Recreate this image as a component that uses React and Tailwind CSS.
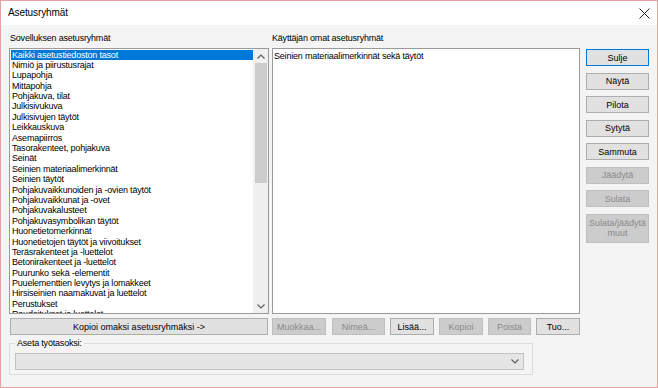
import React from "react";

const items = [
  "Kaikki asetustiedoston tasot",
  "Nimiö ja piirustusrajat",
  "Lupapohja",
  "Mittapohja",
  "Pohjakuva, tilat",
  "Julkisivukuva",
  "Julkisivujen täytöt",
  "Leikkauskuva",
  "Asemapiirros",
  "Tasorakenteet, pohjakuva",
  "Seinät",
  "Seinien materiaalimerkinnät",
  "Seinien täytöt",
  "Pohjakuvaikkunoiden ja -ovien täytöt",
  "Pohjakuvaikkunat ja -ovet",
  "Pohjakuvakalusteet",
  "Pohjakuvasymbolikan täytöt",
  "Huonetietomerkinnät",
  "Huonetietojen täytöt ja viivoitukset",
  "Teräsrakenteet ja -luettelot",
  "Betonirakenteet ja -luettelot",
  "Puurunko sekä -elementit",
  "Puuelementtien levytys ja lomakkeet",
  "Hirsiseinien naamakuvat ja luettelot",
  "Perustukset",
  "Raudoitukset ja luettelot",
];

function Btn({ children, disabled, primary, className = "" }) {
  const look = disabled
    ? "bg-[#cccccc] border-[#bfbfbf] text-[#8a8a8a]"
    : primary
    ? "bg-[#e1e1e1] border-[#0078d7] text-black"
    : "bg-[#e1e1e1] border-[#adadad] text-black";
  return (
    <div
      className={`flex items-center justify-center border text-[9px] leading-[10px] text-center ${look} ${className}`}
    >
      {children}
    </div>
  );
}

function Chevron({ up }) {
  return (
    <svg width="8" height="5" viewBox="0 0 8 5">
      <path
        d={up ? "M0.5 4.5 L4 1 L7.5 4.5" : "M0.5 0.5 L4 4 L7.5 0.5"}
        fill="none"
        stroke="#606060"
        strokeWidth="1.2"
      />
    </svg>
  );
}

export default function App() {
  return (
    <div className="w-[658px] h-[388px] border border-[#e6a1a1] flex flex-col bg-[#f4f4f4] font-['Liberation_Sans',Arial,sans-serif] text-black overflow-hidden">
      {/* title bar */}
      <div className="h-[24px] bg-white flex items-center justify-between pl-[7px] pr-[7px] shrink-0">
        <span className="text-[10px] leading-[12px] tracking-[-0.1px]">Asetusryhmät</span>
        <svg width="11" height="11" viewBox="0 0 11 11">
          <path d="M0.5 0.5 L10.5 10.5 M10.5 0.5 L0.5 10.5" stroke="#222" strokeWidth="1" />
        </svg>
      </div>

      {/* body */}
      <div className="flex flex-col px-[8px]">
        <div className="flex">
          {/* left column */}
          <div className="w-[260px] flex flex-col">
            <div className="h-[23px] flex items-center pl-[1px] pt-[2px] text-[9px] leading-[10px] tracking-[-0.2px]">
              Sovelluksen asetusryhmät
            </div>
            <div className="h-[266px] border border-[#9a9a9a] bg-white flex">
              <div className="flex-1 overflow-hidden pl-[1px] pt-[0.5px]">
                {items.map((t, i) => (
                  <div
                    key={i}
                    className={`h-[10.4px] leading-[10.4px] pl-[1px] text-[9px] tracking-[-0.2px] whitespace-nowrap ${
                      i === 0 ? "bg-[#0078d7] text-white" : "text-black"
                    }`}
                  >
                    {t}
                  </div>
                ))}
              </div>
              <div className="w-[15px] bg-[#f0f0f0] flex flex-col items-center">
                <div className="h-[14px] flex items-center justify-center">
                  <Chevron up />
                </div>
                <div className="w-[12px] h-[120px] bg-[#cdcdcd]" />
                <div className="flex-1" />
                <div className="h-[14px] flex items-center justify-center">
                  <Chevron />
                </div>
              </div>
            </div>
            <Btn className="mt-[4px] mx-[1px] h-[17px]">Kopioi omaksi asetusryhmäksi -&gt;</Btn>
          </div>

          {/* right column */}
          <div className="w-[308px] ml-[3px] flex flex-col">
            <div className="h-[23px] flex items-center pt-[2px] text-[9px] leading-[10px] tracking-[-0.2px]">
              Käyttäjän omat asetusryhmät
            </div>
            <div className="h-[266px] border border-[#9a9a9a] bg-white pl-[1px] pt-[2px]">
              <div className="text-[9px] leading-[10.4px] tracking-[-0.2px] whitespace-nowrap">
                Seinien materiaalimerkinnät sekä täytöt
              </div>
            </div>
            <div className="mt-[4px] flex h-[17px]">
              <Btn disabled className="w-[54px]">Muokkaa...</Btn>
              <Btn disabled className="w-[53px] ml-[6px]">Nimeä...</Btn>
              <Btn className="w-[44px] ml-[5px]">Lisää...</Btn>
              <Btn disabled className="w-[44px] ml-[5px]">Kopioi</Btn>
              <Btn disabled className="w-[43px] ml-[5px]">Poista</Btn>
              <Btn className="w-[44px] ml-[5px]">Tuo...</Btn>
            </div>
          </div>

          {/* buttons column */}
          <div className="w-[63px] ml-[6px] pt-[24px] flex flex-col gap-[6.5px]">
            <Btn primary className="h-[17px]">Sulje</Btn>
            <Btn className="h-[17px]">Näytä</Btn>
            <Btn className="h-[17px]">Pilota</Btn>
            <Btn className="h-[17px]">Sytytä</Btn>
            <Btn className="h-[17px]">Sammuta</Btn>
            <Btn disabled className="h-[17px]">Jäädytä</Btn>
            <Btn disabled className="h-[17px]">Sulata</Btn>
            <Btn disabled className="h-[29px] px-[2px]">
              Sulata/jäädytä
              <br />
              muut
            </Btn>
          </div>
        </div>

        {/* group box */}
        <fieldset className="w-[524px] mt-[3px] border border-[#dcdcdc] pl-[5px] pr-[8px] pb-[4px]">
          <legend className="px-[2px] text-[9px] leading-[10px] tracking-[-0.2px]">Aseta työtasoksi:</legend>
          <div className="mt-[5px] h-[17px] bg-[#e5e5e5] border border-[#c2c2c2] flex items-center justify-end pr-[4px]">
            <Chevron />
          </div>
        </fieldset>
      </div>
    </div>
  );
}
